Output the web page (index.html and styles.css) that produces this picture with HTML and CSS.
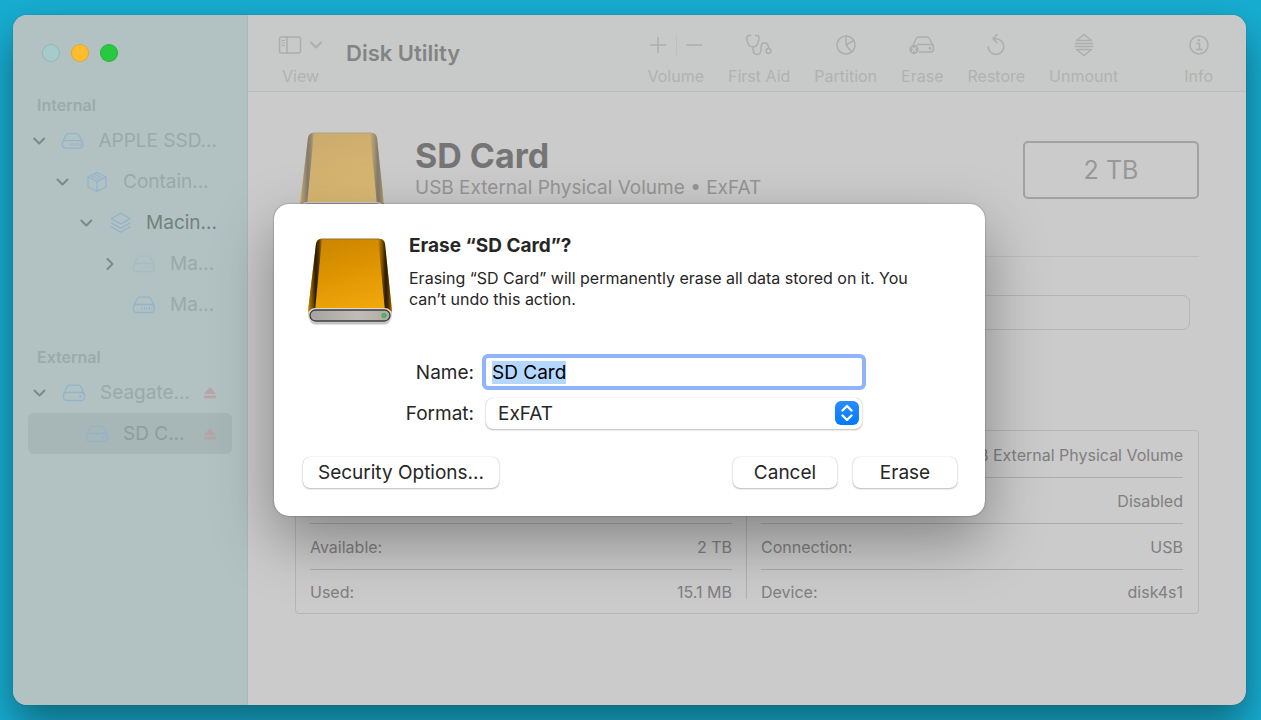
FILE: index.html
```html
<!DOCTYPE html>
<html lang="en">
<head>
    <meta charset="utf-8">
    <title>Disk Utility</title>
    <link rel="stylesheet" href="styles.css">
</head>
<body>
    <!-- shared icons -->
    <svg class="sprite" width="0" height="0" aria-hidden="true">
        <defs>
            <linearGradient id="gold" x1="0" y1="0" x2="0.3" y2="1">
                <stop offset="0" stop-color="#c98300"/>
                <stop offset="0.5" stop-color="#de9400"/>
                <stop offset="1" stop-color="#f0a70c"/>
            </linearGradient>
            <linearGradient id="edge" x1="0" y1="0" x2="1" y2="0">
                <stop offset="0" stop-color="#c98a10"/>
                <stop offset="0.3" stop-color="#7a5200"/>
                <stop offset="0.55" stop-color="#2a1a00"/>
                <stop offset="0.8" stop-color="#5a3b00"/>
                <stop offset="1" stop-color="#b87700"/>
            </linearGradient>
            <linearGradient id="lip" x1="0" y1="0" x2="1" y2="0">
                <stop offset="0" stop-color="#a5a4a2"/>
                <stop offset="0.6" stop-color="#c0bdb8"/>
                <stop offset="1" stop-color="#aeaba4"/>
            </linearGradient>
        </defs>
        <symbol id="i-drive" viewBox="0 0 86 90">
            <rect x="3" y="76" width="80" height="12" rx="6" fill="#000" opacity="0.12"/>
            <rect x="2" y="75" width="82" height="12" rx="6" fill="#000" opacity="0.12"/>
            <path d="M14 2H73Q77 2 78 7L85 74Q85 80 80 80H6Q1 80 1 74L9 7Q10 2 14 2Z" fill="url(#gold)"/>
            <path d="M14 2Q10 2 9 7L1 74H8L15 2Z" fill="url(#edge)"/>
            <path d="M73 2Q77 2 78 7L85 74H78L71 2Z" fill="url(#edge)"/>
            <path d="M14 2H72" stroke="#96732a" stroke-width="1"/>
            <rect x="1" y="71" width="84" height="14" rx="7" fill="#d9d8d4"/>
            <rect x="3" y="73" width="80" height="11" rx="5.500" fill="url(#lip)" stroke="#3c3c3c" stroke-width="1.3"/>
            <circle cx="77" cy="78.500" r="2.200" fill="#2ecc40" stroke="#6c8f6c" stroke-width="0.8"/>
        </symbol>
        <symbol id="i-down" viewBox="0 0 14 14">
            <path d="M2 4.5L7 9.5L12 4.5"/>
        </symbol>
        <symbol id="i-right" viewBox="0 0 14 14">
            <path d="M5 2L10 7L5 12"/>
        </symbol>
        <symbol id="i-internal" viewBox="0 0 24 18">
            <path d="M1.500 10.500L5 3Q5.800 1.200 8 1.200H16Q18.200 1.200 19 3L22.500 10.500M5 8.500H19Q22.500 8.500 22.500 11.500V13Q22.500 16.500 19 16.500H5Q1.500 16.500 1.500 13V11.500Q1.500 8.500 5 8.500Z"/>
            <path d="M10 11.500V13.500M12.500 11.500V13.500M15 11.500V13.500M17.500 11.500V13.500M20 11.500V13.500" stroke-width="1"/>
        </symbol>
        <symbol id="i-external" viewBox="0 0 24 18">
            <path d="M1.500 10.500L5 3Q5.800 1.200 8 1.200H16Q18.200 1.200 19 3L22.500 10.500M5 8.500H19Q22.500 8.500 22.500 11.500V13Q22.500 16.500 19 16.500H5Q1.500 16.500 1.500 13V11.500Q1.500 8.500 5 8.500Z"/>
            <circle cx="18.500" cy="12.500" r="0.700"/>
        </symbol>
        <symbol id="i-eject" viewBox="0 0 14 14">
            <path d="M7 1L13 8H1ZM1 9.500H13V12.500H1Z"/>
        </symbol>
    </svg>

    <div class="window">
        <aside class="sidebar">
            <div class="lights">
                <button class="light close" aria-label="Close"></button>
                <button class="light minimize" aria-label="Minimize"></button>
                <button class="light maximize" aria-label="Zoom"></button>
            </div>

            <h2>Internal</h2>
            <ul>
                <li>
                    <svg class="chevron"><use href="#i-down"/></svg>
                    <svg class="icon"><use href="#i-internal"/></svg>
                    <span>APPLE SSD...</span>
                </li>
                <li class="level-1">
                    <svg class="chevron"><use href="#i-down"/></svg>
                    <svg class="icon" viewBox="0 0 24 22">
                        <path d="M12 1.500L21 6V16L12 20.500L3 16V6ZM3 6L12 10.500L21 6M12 10.500V20.500M6 4.500L15 9M9 3L18 7.500"/>
                    </svg>
                    <span>Contain...</span>
                </li>
                <li class="level-2">
                    <svg class="chevron"><use href="#i-down"/></svg>
                    <svg class="icon" viewBox="0 0 24 22">
                        <path d="M12 1L21.500 6.500L12 12L2.500 6.500ZM2.500 11L12 16.500L21.500 11M2.500 15L12 20.500L21.500 15"/>
                    </svg>
                    <span class="strong">Macin...</span>
                </li>
                <li class="level-3">
                    <svg class="chevron"><use href="#i-right"/></svg>
                    <svg class="icon faint"><use href="#i-internal"/></svg>
                    <span>Ma...</span>
                </li>
                <li class="level-3">
                    <i class="chevron"></i>
                    <svg class="icon"><use href="#i-internal"/></svg>
                    <span>Ma...</span>
                </li>
            </ul>

            <h2>External</h2>
            <ul>
                <li>
                    <svg class="chevron"><use href="#i-down"/></svg>
                    <svg class="icon"><use href="#i-external"/></svg>
                    <span>Seagate...</span>
                    <button class="eject" aria-label="Eject"><svg><use href="#i-eject"/></svg></button>
                </li>
                <li class="level-1 selected">
                    <i class="chevron"></i>
                    <svg class="icon"><use href="#i-external"/></svg>
                    <span>SD C...</span>
                    <button class="eject" aria-label="Eject"><svg><use href="#i-eject"/></svg></button>
                </li>
            </ul>
        </aside>

        <div class="content">
            <header class="toolbar">
                <button class="tool view">
                    <span class="tool-icon">
                        <svg width="24" height="20" viewBox="0 0 24 20">
                            <rect x="1.500" y="2" width="21" height="16" rx="2"/>
                            <path d="M9 2V18"/>
                            <path d="M4 5.500H6.500M4 8H6.500M4 10.500H6.500" stroke-width="1"/>
                        </svg>
                        <svg class="view-arrow" width="14" height="14"><use href="#i-down"/></svg>
                    </span>
                    View
                </button>
                <h1>Disk Utility</h1>
                <div class="tools">
                    <button class="tool">
                        <span class="tool-icon">
                            <svg width="56" height="22" viewBox="0 0 56 22">
                                <path d="M2.500 11H17.500M10 3.500V18.500M39 11H54"/>
                                <path d="M28.500 1V21" opacity="0.350" stroke-width="1"/>
                            </svg>
                        </span>
                        Volume
                    </button>
                    <button class="tool">
                        <span class="tool-icon">
                            <svg width="28" height="22" viewBox="0 0 28 22">
                                <path d="M5.500 1.500H4Q1.500 1.500 1.800 4.500Q2.500 10.500 5 12Q8 14 10.800 12Q13.200 10.500 14 4.500Q14.200 1.500 12 1.500H10.500"/>
                                <path d="M8 13V15Q8 20.500 12 20.500Q15.500 20.500 16 16V13Q16.500 8.800 19.500 8.800Q23 8.800 23.500 13V14.500"/>
                                <circle cx="23.500" cy="17" r="2.400"/>
                            </svg>
                        </span>
                        First Aid
                    </button>
                    <button class="tool">
                        <span class="tool-icon">
                            <svg width="22" height="22" viewBox="0 0 22 22">
                                <circle cx="11" cy="11" r="9"/>
                                <path d="M11 2V11L18.800 6.500M11 11L16.500 18"/>
                            </svg>
                        </span>
                        Partition
                    </button>
                    <button class="tool">
                        <span class="tool-icon">
                            <svg class="erase-icon" width="28" height="20" viewBox="0 0 28 20">
                                <path d="M5.500 9L8.200 3.500Q9 2 11 2H18.500Q20.500 2 21.300 3.500L25 10M9.500 9.500H22.500Q25.500 9.500 25.500 12V14Q25.500 17 22.500 17H11.500"/>
                                <circle cx="22" cy="13.300" r="0.700"/>
                                <circle cx="6" cy="14.500" r="4.700" class="solid"/>
                                <path d="M4.300 12.800L7.700 16.200M7.700 12.800L4.300 16.200" class="cut"/>
                            </svg>
                        </span>
                        Erase
                    </button>
                    <button class="tool">
                        <span class="tool-icon">
                            <svg width="22" height="24" viewBox="0 0 22 24">
                                <path d="M3.200 13.500A7.800 7.800 0 1 0 11 5.800H8.500M12 1.500L8 5.800L12 9.800"/>
                            </svg>
                        </span>
                        Restore
                    </button>
                    <button class="tool">
                        <span class="tool-icon">
                            <svg width="22" height="24" viewBox="0 0 22 24">
                                <path d="M11 1.500L18.500 7.500H3.500ZM2.500 10.500H19.500M2.500 13.500H19.500M3.500 16.500H18.500L11 22.500Z"/>
                            </svg>
                        </span>
                        Unmount
                    </button>
                    <button class="tool info">
                        <span class="tool-icon">
                            <svg width="22" height="22" viewBox="0 0 22 22">
                                <circle cx="11" cy="11" r="9"/>
                                <path d="M9 9.500H11.500V15.500M8.500 15.500H14"/>
                                <circle cx="11" cy="6.300" r="0.600"/>
                            </svg>
                        </span>
                        Info
                    </button>
                </div>
            </header>

            <main>
                <section class="volume">
                    <svg class="drive" width="86" height="90"><use href="#i-drive"/></svg>
                    <div class="volume-name">
                        <h2>SD Card</h2>
                        <p>USB External Physical Volume • ExFAT</p>
                    </div>
                    <div class="capacity">2 TB</div>
                </section>

                <div class="usage"></div>

                <section class="details">
                    <table>
                        <tr><th></th><td></td></tr>
                        <tr><th></th><td></td></tr>
                        <tr><th>Available:</th><td>2 TB</td></tr>
                        <tr><th>Used:</th><td>15.1 MB</td></tr>
                    </table>
                    <div class="divider"></div>
                    <table>
                        <tr><th></th><td>USB External Physical Volume</td></tr>
                        <tr><th></th><td>Disabled</td></tr>
                        <tr><th>Connection:</th><td>USB</td></tr>
                        <tr><th>Device:</th><td>disk4s1</td></tr>
                    </table>
                </section>
            </main>
        </div>

        <form class="sheet" role="dialog" aria-labelledby="sheet-title" onsubmit="return false">
            <div class="message">
                <svg width="86" height="90"><use href="#i-drive"/></svg>
                <div>
                    <h3 id="sheet-title">Erase “SD Card”?</h3>
                    <p>Erasing “SD Card” will permanently erase all data stored on it. You can’t undo this action.</p>
                </div>
            </div>

            <div class="fields">
                <label for="name">Name:</label>
                <input id="name" type="text" value="SD Card" spellcheck="false" autocomplete="off">
                <label for="format">Format:</label>
                <div class="popup">
                    <select id="format">
                        <option>ExFAT</option>
                    </select>
                    <svg width="24" height="24" viewBox="0 0 24 24">
                        <path d="M7.500 9.500L12 5L16.500 9.500M7.500 14.500L12 19L16.500 14.500"/>
                    </svg>
                </div>
            </div>

            <div class="actions">
                <button type="button" class="security">Security Options...</button>
                <button type="button">Cancel</button>
                <button type="submit">Erase</button>
            </div>
        </form>
    </div>

    <script>
        var nameInput = document.getElementById('name');
        nameInput.focus();
        nameInput.select();
    </script>
</body>
</html>
```
FILE: styles.css
```css
* {
    box-sizing: border-box;
}
body {
    margin: 0;
    padding: 15px 15px 15px 13px;
    height: 100vh;
    overflow: hidden;
    background: #17add1;
    font-family: Inter, "Liberation Sans", sans-serif;
    color: #8d8d8d;
}
h1, h2, h3, p, ul {
    margin: 0;
    padding: 0;
}
button, input, select {
    font-family: inherit;
}
svg {
    fill: none;
    stroke-linecap: round;
    stroke-linejoin: round;
}
.sprite {
    position: absolute;
}

.window {
    position: relative;
    display: flex;
    height: 100%;
    border-radius: 14px;
    background: #cbcbcb;
    box-shadow: 0 0 1px rgba(0, 0, 0, 0.5), 0 20px 40px rgba(0, 0, 0, 0.4);
}

/* sidebar */
.sidebar {
    width: 235px;
    flex: none;
    padding: 29px 15px 0;
    background: #b2c2c2;
    border-right: 1px solid #a9b8b8;
    border-radius: 14px 0 0 14px;
}
.lights {
    display: flex;
    gap: 11px;
    padding-left: 14px;
    margin-bottom: 31px;
}
.light {
    width: 18px;
    height: 18px;
    padding: 0;
    border: 1px solid rgba(0, 0, 0, 0.1);
    border-radius: 50%;
}
.close {
    background: #a5cbcb;
}
.minimize {
    background: #febc2e;
}
.maximize {
    background: #28c840;
}
.sidebar h2 {
    padding-left: 9px;
    font-size: 16px;
    line-height: 24px;
    font-weight: 600;
    color: #9baaaa;
}
.sidebar ul {
    list-style: none;
    margin-bottom: 20px;
}
.sidebar li {
    display: flex;
    align-items: center;
    height: 41px;
    padding: 0 15px 0 4px;
    border-radius: 6px;
    font-size: 19px;
    white-space: nowrap;
    color: #9aa9a9;
}
.sidebar h2 + ul {
    padding-top: 3px;
}
.sidebar .level-1 {
    padding-left: 27px;
}
.sidebar .level-2 {
    padding-left: 51px;
}
.sidebar .level-3 {
    padding-left: 74px;
}
.sidebar .selected {
    background: #a7b6b6;
    color: #8e9c9c;
}
.sidebar span {
    flex: 1;
}
.sidebar .strong {
    color: #728080;
}
.chevron {
    width: 15px;
    height: 14px;
    margin-right: 15px;
    stroke: #7b8989;
    stroke-width: 2;
}
.icon {
    width: 24px;
    height: 22px;
    margin-right: 14px;
    stroke: #93b3cc;
    stroke-width: 1.3px;
}
.faint {
    opacity: 0.4;
}
.eject {
    display: flex;
    padding: 0;
    border: 0;
    background: none;
}
.eject svg {
    width: 14px;
    height: 14px;
    fill: #b9a5a7;
}
.selected .eject svg {
    fill: #b3a5a6;
}

/* toolbar */
.content {
    flex: 1;
    min-width: 0;
}
.toolbar {
    display: flex;
    align-items: flex-start;
    height: 77px;
    padding: 18px 33px 0 30px;
    background: #c8cac9;
    border-bottom: 1px solid #bbbcbc;
    border-radius: 0 14px 0 0;
}
.toolbar h1 {
    margin: 6px 0 0 23px;
    font-size: 22px;
    line-height: 28px;
    font-weight: 600;
    color: #828484;
}
.tools {
    display: flex;
    gap: 24px;
    margin-left: auto;
}
.tool {
    display: flex;
    flex-direction: column;
    align-items: center;
    padding: 0;
    border: 0;
    background: none;
    font-size: 16px;
    line-height: 20px;
    color: #b0b2b1;
}
.tool-icon {
    display: flex;
    align-items: center;
    height: 24px;
    margin-bottom: 9px;
    stroke: #acaeae;
    stroke-width: 1.5px;
}
.view-arrow {
    margin-left: 7px;
    stroke-width: 2;
}
.solid {
    fill: #acaeae;
    stroke: none;
}
.cut {
    stroke: #c8cac9;
}
.info {
    margin-left: 42px;
}

/* volume */
main {
    padding: 39px 47px 0;
}
.volume {
    display: flex;
    height: 126px;
    padding-left: 4px;
    border-bottom: 1px solid #bcbcbc;
}
.drive {
    opacity: 0.45;
}
.volume-name {
    margin: 4px auto 0 30px;
}
.volume-name h2 {
    font-size: 34px;
    line-height: 42px;
    font-weight: 700;
    color: #757575;
}
.volume-name p {
    font-size: 19px;
    line-height: 22px;
    color: #959595;
}
.capacity {
    width: 176px;
    height: 58px;
    margin-top: 10px;
    border: 2px solid #a2a2a2;
    border-radius: 5px;
    font-size: 25px;
    line-height: 54px;
    text-align: center;
    color: #989898;
}
.usage {
    height: 35px;
    margin: 38px 9px 100px;
    border: 1px solid #b5b5b5;
    border-radius: 7px;
}

.details {
    display: flex;
    padding: 1px 15px 0 14px;
    border: 1px solid #b5b5b5;
    border-radius: 4px;
}
.details table {
    flex: 1;
    border-spacing: 0;
    font-size: 16px;
    color: #7f7f7f;
}
.details th, .details td {
    height: 46px;
    padding: 0;
    border-bottom: 1px solid #adadad;
    font-weight: 400;
    text-align: left;
}
.details td {
    text-align: right;
}
.details tr:last-child > * {
    height: 43px;
    border-bottom: 0;
}
.divider {
    width: 1px;
    margin: 14px;
    background: #b0b0b0;
}

/* erase sheet, floats over the window */
.sheet {
    position: absolute;
    top: 189px;
    left: 0;
    right: 0;
    width: 711px;
    margin: 0 auto;
    padding: 30px 28px 28px 29px;
    border-radius: 15px;
    background: #fff;
    box-shadow: 0 0 2px rgba(0, 0, 0, 0.4), 0 24px 60px rgba(0, 0, 0, 0.35);
    color: #262626;
}
.message {
    display: flex;
    gap: 16px;
    padding: 0 30px 0 4px;
    margin-bottom: 31px;
}
.message svg {
    flex: none;
    margin-top: 3px;
}
.message h3 {
    font-size: 19px;
    line-height: 24px;
    font-weight: 700;
    margin-bottom: 10px;
}
.message p {
    font-size: 16px;
    line-height: 21px;
}
.fields {
    display: grid;
    grid-template-columns: 171px 376px;
    column-gap: 12px;
    row-gap: 12px;
    align-items: center;
    margin-bottom: 28px;
}
.fields label {
    text-align: right;
    font-size: 19px;
}
.fields input {
    height: 28px;
    padding: 0 6px;
    border: 0;
    outline: 4px solid #8fb4fb;
    border-radius: 2px;
    background: #fff;
    color: #000;
    font-size: 19px;
}
.fields input::selection {
    background: #b3d7ff;
    color: #000;
}
.popup {
    position: relative;
}
.popup select {
    display: block;
    width: 100%;
    height: 31px;
    padding: 0 12px;
    appearance: none;
    font-size: 19px;
}
.popup svg {
    position: absolute;
    top: 3px;
    right: 3px;
    border-radius: 6px;
    background: linear-gradient(#2a8cff, #007aff);
    stroke: #fff;
    stroke-width: 2.4px;
    pointer-events: none;
}
.actions {
    display: flex;
    gap: 16px;
}
.actions button {
    width: 104px;
    height: 31px;
    padding: 0;
    font-size: 19px;
}
.actions .security {
    width: 196px;
    margin-right: auto;
}
.popup select, .actions button {
    border: 0;
    border-radius: 7px;
    background: #fff;
    box-shadow: 0 0 1px rgba(0, 0, 0, 0.3), 0 1px 2px rgba(0, 0, 0, 0.25);
    color: #262626;
}
```
